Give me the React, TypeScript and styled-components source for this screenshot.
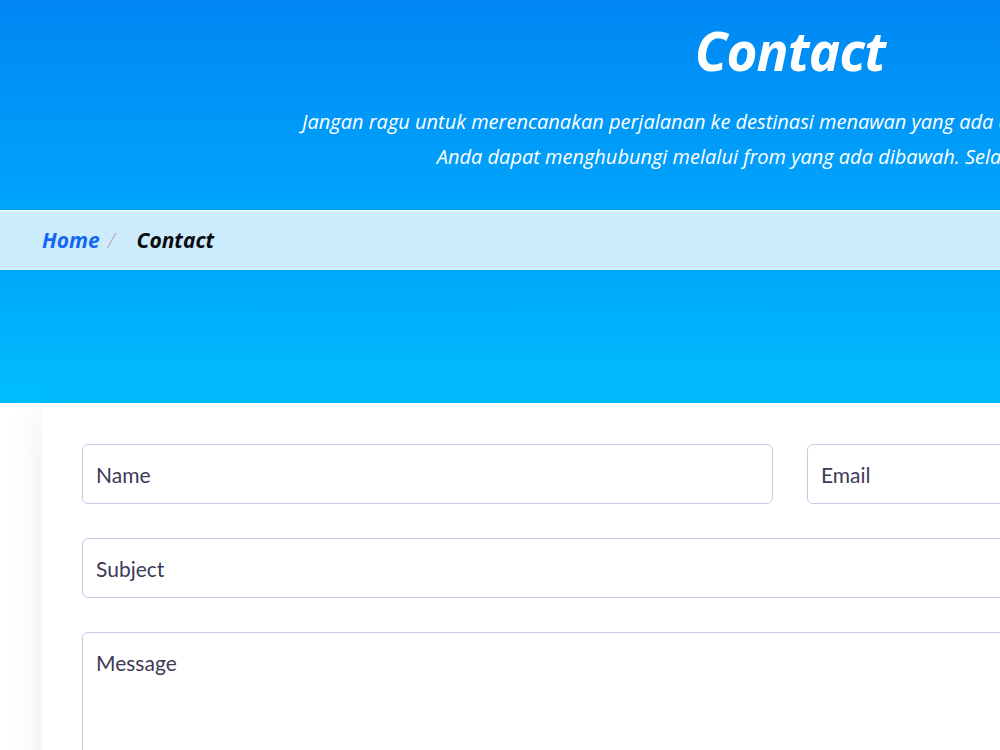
import React from 'react';
import styled, { createGlobalStyle } from 'styled-components';

const GlobalStyle = createGlobalStyle`
    html, body {
        margin: 0;
        padding: 0;
        overflow: hidden;
        background: #ffffff;
    }
    * {
        box-sizing: border-box;
    }
`;

const Page = styled.div`
    width: 1580px;
    font-family: Lato, 'Open Sans', sans-serif;
    background: #ffffff;
`;

const Hero = styled.header`
    height: 210px;
    padding-top: 18px;
    background: linear-gradient(180deg, #0086f3 0%, #0099f8 60%, #00a5fb 100%);
    color: #ffffff;
    text-align: center;
    font-family: 'Open Sans', Lato, sans-serif;
`;

const HeroTitle = styled.h1`
    margin: 0;
    font-size: 53px;
    font-weight: 700;
    font-style: italic;
    line-height: 66px;
    letter-spacing: -0.8px;
`;

const HeroText = styled.p`
    margin: 20px 0 0;
    font-size: 20px;
    font-style: italic;
    line-height: 35px;
`;

const Crumbs = styled.nav`
    height: 60px;
    display: flex;
    align-items: center;
    padding-left: 42px;
    background: #cdecfb;
    border-top: 2px solid #e2f6fe;
    border-bottom: 2px solid #d9f2fd;
    font-family: 'Open Sans', Lato, sans-serif;
    font-size: 21px;
    font-weight: 700;
    font-style: italic;
`;

const CrumbLink = styled.a`
    color: #1467f6;
    text-decoration: none;
`;

const CrumbSep = styled.span`
    margin: 0 22px 0 8px;
    color: #b9a3ad;
    font-weight: 300;
`;

const CrumbCurrent = styled.span`
    color: #0b0b12;
`;

const Band = styled.div`
    height: 133px;
    background: linear-gradient(180deg, #00a9fa 0%, #00b4fc 55%, #00befe 100%);
`;

const Section = styled.section`
    padding: 0 42px 60px;
`;

const Card = styled.div`
    background: #ffffff;
    padding: 41px 40px 40px;
    box-shadow: 0 10px 40px rgba(20, 30, 60, 0.08);
    display: flex;
    flex-direction: column;
    gap: 34px;
`;

const Row = styled.div`
    display: grid;
    grid-template-columns: 1fr 1fr;
    gap: 34px;
`;

const fieldBase = `
    width: 100%;
    border: 1px solid #c4cae4;
    border-radius: 6px;
    padding: 0 13px;
    font-family: Lato, 'Open Sans', sans-serif;
    font-size: 21px;
    color: #3b3854;
    background: #ffffff;
    outline: none;
    &::placeholder {
        color: #3d3a57;
    }
`;

const Field = styled.input`
    ${fieldBase}
    height: 60px;
`;

const Message = styled.textarea`
    ${fieldBase}
    height: 200px;
    padding-top: 17px;
    resize: none;
`;

export default function App() {
    return (
        <Page>
            <GlobalStyle />
            <Hero>
                <HeroTitle>Contact</HeroTitle>
                <HeroText>
                    Jangan ragu untuk merencanakan perjalanan ke destinasi menawan yang ada di Indonesia bersama tim kami.
                    <br />
                    Anda dapat menghubungi melalui from yang ada dibawah. Selamat berlibur ya!
                </HeroText>
            </Hero>
            <Crumbs>
                <CrumbLink href="#">Home</CrumbLink>
                <CrumbSep>/</CrumbSep>
                <CrumbCurrent>Contact</CrumbCurrent>
            </Crumbs>
            <Band />
            <Section>
                <Card>
                    <Row>
                        <Field placeholder="Name" />
                        <Field placeholder="Email" />
                    </Row>
                    <Field placeholder="Subject" />
                    <Message placeholder="Message" />
                </Card>
            </Section>
        </Page>
    );
}
